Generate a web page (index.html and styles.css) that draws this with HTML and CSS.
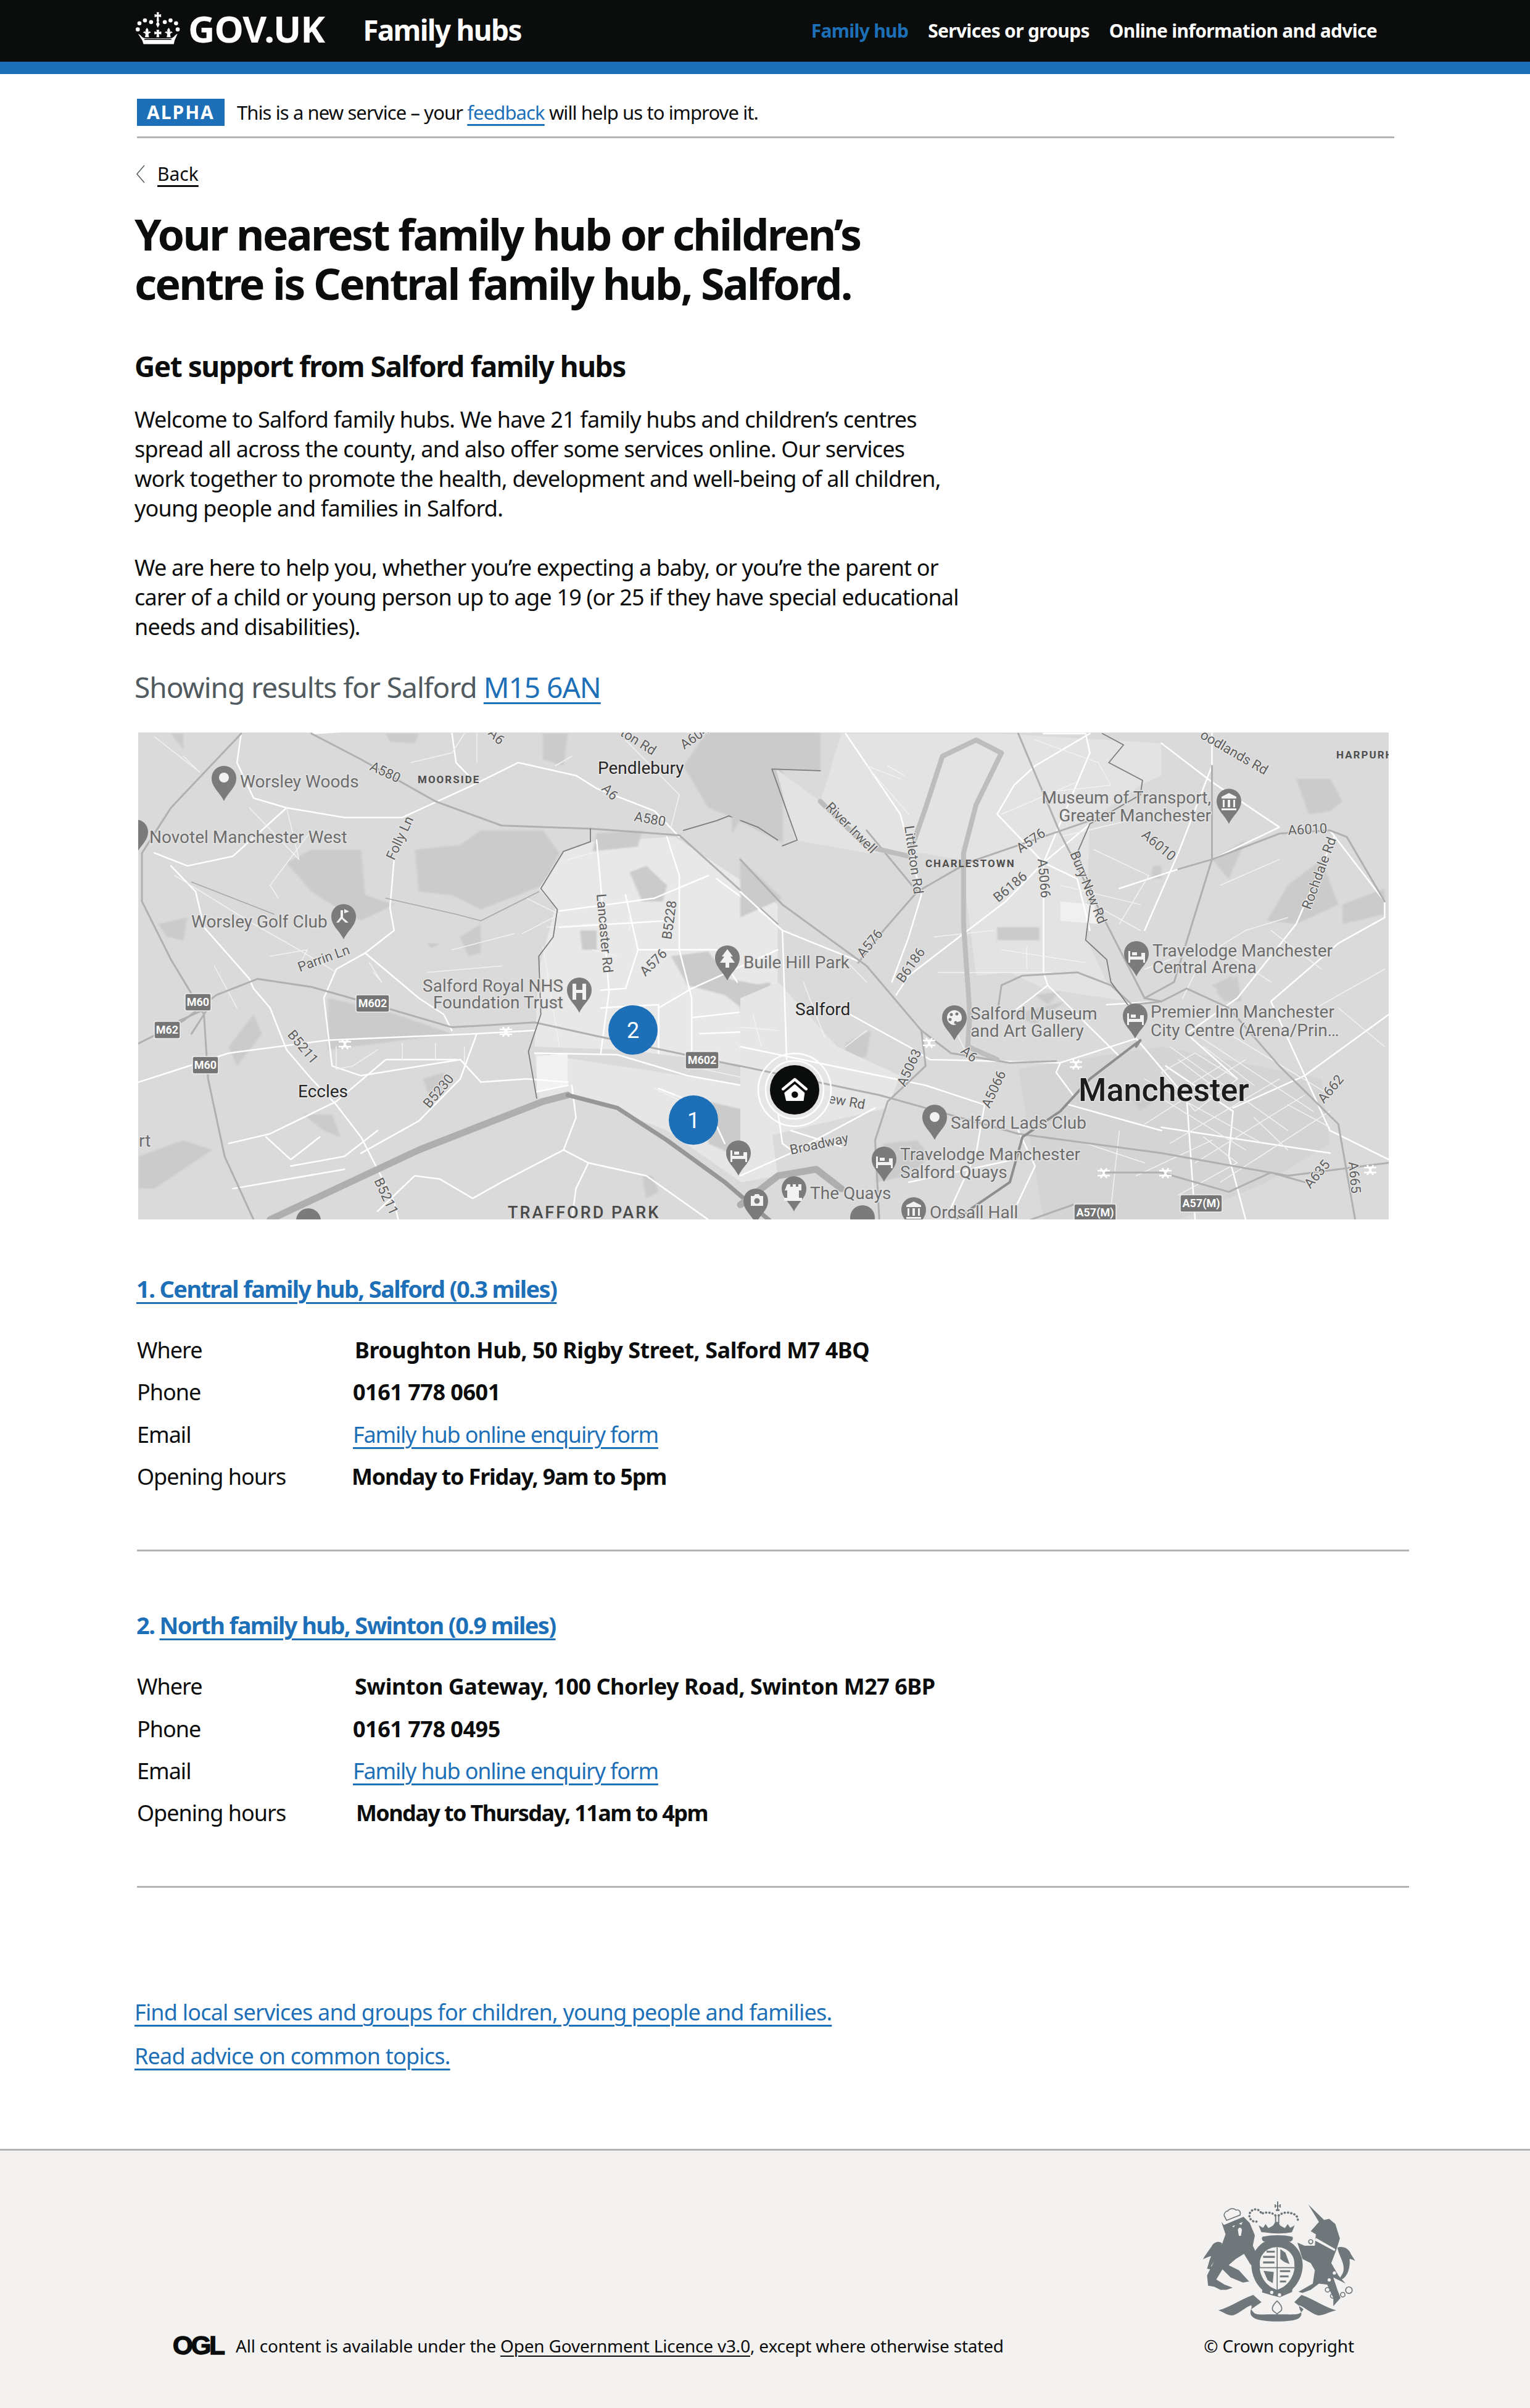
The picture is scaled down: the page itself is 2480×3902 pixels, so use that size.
FILE: index.html
```html
<!DOCTYPE html>
<html lang="en">
<head>
    <meta charset="UTF-8">
    <meta name="viewport" content="width=device-width, initial-scale=1.0">
    <title>Family hubs</title>
    <link rel="stylesheet" href="styles.css">
</head>
<body>
    <header class="site-header">
        <a class="logo" href="#">
            <svg class="crown" viewBox="30 20 220 165" aria-hidden="true">
                <g fill="#fff">
                    <path d="M132 22h12l-2 12 12-2v14l-12-2 2 24h-12l2-24-12 2V32l12 2z"/>
                    <path d="M138 64l9 17-9 17-9-17z"/>
                    <circle cx="48" cy="76" r="10"/><circle cx="75" cy="62" r="10"/><circle cx="105" cy="70" r="10"/>
                    <circle cx="172" cy="70" r="10"/><circle cx="200" cy="62" r="10"/><circle cx="227" cy="76" r="10"/>
                    <circle cx="40" cy="106" r="10"/><circle cx="235" cy="106" r="10"/>
                    <path d="M131 108h14l-2 10 12-2v14l-12-2 2 16h-14l2-16-12 2v-14l12 2z"/>
                    <path d="M85 98c7 8 9 14 5 20 6-4 12-2 14 4-6 0-10 2-12 8l3 14H75l3-14c-2-6-6-8-12-8 2-6 8-8 14-4-4-6-2-12 5-20z"/>
                    <path d="M191 98c7 8 9 14 5 20 6-4 12-2 14 4-6 0-10 2-12 8l3 14h-20l3-14c-2-6-6-8-12-8 2-6 8-8 14-4-4-6-2-12 5-20z"/>
                    <path d="M42 128c6 2 12 6 16 12l10 8 14 2h112l14-2 10-8c4-6 10-10 16-12l-14 32-4 18H68l-6-18z"/>
                </g>
                <g fill="#0b0c0c">
                    <path d="M72 152h132v5H72z"/>
                </g>
            </svg>
            <span class="logo-text">GOV.UK</span>
        </a>
        <a class="service-name" href="#">Family hubs</a>
        <nav class="top-nav">
            <a class="active" href="#">Family hub</a>
            <a href="#">Services or groups</a>
            <a href="#">Online information and advice</a>
        </nav>
    </header>

    <div class="container">
        <div class="phase-banner">
            <strong class="tag">ALPHA</strong>
            <span>This is a new service – your <a href="#">feedback</a> will help us to improve it.</span>
        </div>

        <a class="back-link" href="#">
            <svg class="chevron" viewBox="0 0 15 30" aria-hidden="true"><path d="M14 1 2 15l12 14" fill="none" stroke="#505a5f" stroke-width="1.500"/></svg>
            <span>Back</span>
        </a>

        <div class="intro">
            <h1>Your nearest family hub or children’s centre is Central family hub, Salford.</h1>
            <h2>Get support from Salford family hubs</h2>
            <p>Welcome to Salford family hubs. We have 21 family hubs and children’s centres<br>spread all across the county, and also offer some services online. Our services<br>work together to promote the health, development and well-being of all children,<br>young people and families in Salford.</p>
            <p>We are here to help you, whether you’re expecting a baby, or you’re the parent or<br>carer of a child or young person up to age 19 (or 25 if they have special educational<br>needs and disabilities).</p>
        </div>

        <p class="showing">Showing results for Salford <a href="#">M15 6AN</a></p>

        <svg class="map" viewBox="0 0 2027 789" role="img" aria-label="Map of Salford">
            <rect width="2027" height="789" fill="#dadada"/>

            <!-- west half, coordinates read off the crop -->
            <g transform="translate(-14 -14) scale(.67 .523)">
                <g class="patch">
                    <path d="M380 430 440 390 560 390 570 530 640 560 560 610 490 560 440 520z"/>
                    <path d="M690 390 800 375 850 330 1000 330 1040 400 1000 500 850 575 780 530 700 520z"/>
                    <path d="M1000 30 1060 30 1050 130 1000 110zM620 30 700 30 690 60 630 55zM100 30 130 30 130 80z"/>
                    <path d="M22 1340 130 1290 200 1320 60 1440 22 1440zM800 660 850 620 850 710 820 720zM720 680 750 680 730 695z"/>
                    <path d="M240 1000 300 900 320 960 260 1060zM480 850 620 890 780 960 480 1010z"/>
                    <path d="M1240 1400 1265 1400 1280 1450 1250 1470zM710 1100 760 1080 760 1130 730 1170zM420 1210 490 1210 510 1280 470 1260z"/>
                    <path d="M70 620 140 600 130 670 90 660z"/>
                    <path d="M1400 20 1580 20 1580 370 1450 285 1400 260 1340 130z"/>
                </g>
                <path d="M1050 395 1120 365 1320 350 1568 560 1568 1070 1200 1010 980 1000 990 760 1030 570 990 510z" fill="#e8e8e8"/>
                <path d="M980 1020 1540 1130 1568 1400 1480 1420 1300 1260 1080 1150 990 1160z" fill="#e6e6e6"/>
                <path d="M985 1030 1060 1020 1060 1120 985 1140z" fill="#f2f2f2"/>
                <g class="patch">
                    <path d="M1130 340 1240 330 1230 380 1120 395zM1090 640 1130 640 1130 700 1095 700z"/>
                    <path d="M1210 460 1250 440 1300 500 1290 550 1240 550z"/>
                    <path d="M1310 720 1400 705 1450 790 1568 820 1480 880 1440 840 1350 810z"/>
                    <path d="M1400 1170 1500 1200 1490 1300 1470 1340 1400 1300z"/>
                </g>
                <g class="m-white">
                    <path d="M380 260 520 290 660 290 830 190 940 120 1080 160 1130 200 1270 270 1330 350"/>
                    <path d="M60 400 140 440 250 410 380 260 300 230 260 120 270 30"/>
                    <path d="M100 440 160 520 180 630 290 790 300 820 340 880 380 1010 440 1100 500 1180 560 1280 640 1480 650 1536"/>
                    <path d="M640 420 630 570 640 640 570 710 500 760 470 850 490 1060 560 1090 800 1040 850 1110 960 1100 1060 1110"/>
                    <path d="M570 710 700 850 760 900 780 950M240 1300 340 1270 500 1170 620 1040 790 1040"/>
                    <path d="M560 1330 700 1230 800 1100 840 960M390 1370 520 1340 600 1260"/>
                    <path d="M22 1110 240 1020 480 980 840 960 980 950M440 30 560 20M780 30 790 120 820 160"/>
                    <path d="M1130 360 1140 500 1160 830 1140 1020M1040 580 1270 540 1400 470M1040 630 1300 610M1200 530 1230 700 1200 820 1140 825"/>
                    <path d="M1300 350 1330 470 1330 700 1360 850 1360 1030M1230 700 1330 700 1420 700 1470 800M1280 880 1360 820 1568 700"/>
                    <path d="M1140 880 1280 870 1280 1020M1360 910 1568 880M1380 960 1568 950M1420 480 1568 620"/>
                    <path d="M980 1020 1180 1025 1350 1090 1568 1140"/>
                    <path d="M1060 1120 985 1140M1070 1120 1080 1220 1050 1320 900 1420 830 1470 750 1410 690 1400 600 1510"/>
                    <path d="M1050 1320 1110 1360 1080 1440 1070 1536M1110 1360 1250 1400 1400 1536M1280 1130 1400 1190 1440 1300"/>
                    <path d="M250 1440 520 1380M330 1280 390 1350 460 1280"/>
                </g>
                <g class="m-thin">
                    <path d="M60 40 170 150 130 100M680 120 780 90 810 30M840 30 840 120M1030 130 1070 100M1200 50 1330 220 1310 320"/>
                    <path d="M290 260 410 420 380 260M440 330 340 500 360 540M110 470 300 620 410 700 500 770"/>
                    <path d="M205 750 260 880M340 720 430 700 410 750M580 740 610 800 590 770M720 770 900 750M780 700 930 650"/>
                    <path d="M500 1000 500 1070 540 1060 600 1010M660 1040 660 990M740 1040 740 990M810 1000 810 1050"/>
                    <path d="M1270 1130 1370 1190M1010 630 1130 620M1060 420 1120 400M1210 590 1210 640M1180 720 1120 700"/>
                    <path d="M1390 1070 1568 1120M1320 1150 1400 1190M1000 690 1040 1000M960 540 1040 590 950 650"/>
                </g>
                <path class="m-road" d="M440 30 560 110 740 240 900 315 1120 325 1330 345 1568 620"/>
                <path class="m-road" d="M270 30 100 260 30 400 30 550 100 730 180 900 190 1100 230 1340 300 1536"/>
                <path class="m-road" d="M22 990 130 920 210 840 310 790 440 815 620 880 780 940 980 925 1140 970 1568 1085"/>
                <path class="m-road" d="M120 920 190 880 150 960"/>
                <path class="m-border" d="M1450 285 1420 300 1340 330M1115 325 1115 365 1050 395 995 510 1035 575 1025 660 990 720 995 900 965 1015 985 1160"/>
                <path class="m-border" d="M1450 285 1520 320 1568 360"/>
                <path class="m-thin-dark" d="M150 490 350 590 M620 540 790 590 850 610 990 520"/>
                <path class="m-canal" d="M340 1536 700 1320 1000 1170 1060 1150"/>
                <path class="m-cut" d="M1060 1150 1180 1190 1300 1290 1440 1420 1568 1560"/>
            </g>

            <!-- east half -->
            <g transform="translate(976 -14) scale(.6826 .523)">
                <g class="patch">
                    <path d="M-20 340 75 140 190 145 190 20 -20 20z"/>
                    <path d="M0 420 50 480 100 540 0 600zM0 820 70 800 80 860 0 900z"/>
                    <path d="M640 240 690 240 660 280zM830 80 900 90 880 130 830 130z"/>
                    <path d="M1320 170 1400 170 1430 240 1400 270 1350 280zM1380 420 1300 500 1250 610 1320 620 1420 560z"/>
                    <path d="M1430 560 1530 510 1530 590 1430 620zM1200 360 1120 420 1160 480z"/>
                    <path d="M250 990 310 950 300 1030 250 1050zM340 1300 420 1290 450 1340 400 1400 320 1420z"/>
                    <path d="M1120 810 1170 780 1150 840zM820 1170 900 1150 880 1220zM1280 1120 1330 1090 1340 1160z"/>
                    <path d="M640 900 710 880 770 860 700 930zM0 1200 30 1180 30 1250 0 1250z"/>
                </g>
                <path d="M85 140 190 240 240 30 620 30 1000 60 1000 160 950 190 830 300 820 660 870 800 920 860 720 820 640 770 560 780 540 570 520 420 430 400 300 400 130 360z" fill="#e3e3e3"/>
                <path d="M0 850 90 800 230 1000 380 1090 350 1190 120 1260 0 1300z" fill="#e6e6e6"/>
                <path d="M660 1070 750 1050 1000 1000 1380 1100 1400 1300 1250 1420 1040 1536 720 1536z" fill="#d4d4d4"/>
                <path d="M760 550 840 560 850 620 760 610z" fill="#f0f0f0"/>
                <g class="patch">
                    <path d="M610 630 710 630 710 670 610 670zM980 440 1000 440 1000 480 975 480z"/>
                    <path d="M1130 830 1180 780 1190 860 1150 860zM930 1160 980 1170 950 1200zM700 840 760 830 730 870z"/>
                </g>
                <g class="m-white">
                    <path d="M250 30 380 280 430 530 400 660 360 800M720 30 820 30 830 90 720 430 720 770 730 810 900 1030"/>
                    <path d="M610 280 650 190 700 130 830 30M610 280 720 430 800 480 830 640M100 640 110 1040M0 520 100 640 290 740"/>
                    <path d="M370 840 400 780 630 550 720 430 840 300M260 900 400 1000M730 810 640 900M870 870 1000 860M0 1000 440 1120 580 1180"/>
                    <path d="M400 1000 450 1040 760 1050 940 975M760 1050 750 1080 790 1150M960 640 1040 400 1120 130 1120 30"/>
                    <path d="M1000 60 1120 180 1280 320 1120 420 1040 450 900 510M1300 340 1400 330 1530 550 1530 600"/>
                    <path d="M1410 350 1320 620 1180 850 1060 960 1180 1100M1530 600 1420 680 1260 860 1400 1260 1540 1350"/>
                    <path d="M1010 1060 1170 1200 1160 1340 1200 1536M1000 1250 1400 1330M940 975 1060 1160 1080 1536M1170 1190 1340 1090 1540 900"/>
                    <path d="M120 1260 240 1310M0 1400 120 1330 320 1190M90 1210 100 1300 130 1330M580 1180 560 1330 500 1500M780 1180 1000 1260"/>
                    <path d="M660 1260 700 1370 640 1536M400 1420 650 1350"/>
                </g>
                <g class="m-thin">
                    <path d="M380 170 300 130 400 280M350 130 390 160M700 50 850 120 880 190 740 210M620 280 800 180M760 350 920 300"/>
                    <path d="M840 390 970 470 900 620M760 500 950 560M620 700 820 740M680 690 680 760M620 770 740 770M840 560 950 640"/>
                    <path d="M1050 850 1100 720 1200 640 1300 600M1120 680 1260 800M1260 640 1380 760M960 760 1100 690M1140 500 1280 420"/>
                    <path d="M1000 1080 1080 1020 1180 1100 1080 1200 1000 1080M1040 1040 1150 1150M1100 1000 1220 1120M1040 1140 1140 1060"/>
                    <path d="M1100 1280 1180 1360 1040 1460M1220 1220 1300 1320M1300 1180 1400 1250M820 1300 960 1360M900 1260 880 1500"/>
                    <path d="M1340 900 1530 760M1420 880 1530 1000M240 720 300 800M150 800 200 970M460 660 600 640M470 770 620 770"/>
                    <path d="M500 920 540 1030M250 1000 300 950M0 940 90 950M30 900 50 1000"/>
                    <path d="M960 1100 1240 1300M1000 1160 1200 1320M1020 1000 1300 1260M1080 960 1360 1200M1160 960 1400 1150"/>
                    <path d="M960 1240 1200 1040M1020 1300 1280 1100M1080 1360 1340 1150M1140 1420 1400 1200M940 1400 1120 1290"/>
                </g>
                <path class="m-road" d="M0 1060 330 1150 660 1270 1000 1330 1300 1400 1540 1360"/>
                <path class="m-road" d="M660 30 760 340 960 850 1000 860 1060 820 1160 880 1280 1060 1420 1240 1460 1536"/>
                <path class="m-road" d="M280 740 340 640 420 520 540 430 830 300M420 520 300 330 M0 420 100 560 300 750 430 950 500 1020 640 1050 750 1045"/>
                <path class="m-road" d="M430 950 440 1060 350 1170 320 1290 330 1536"/>
                <path class="m-road" d="M1040 450 1120 420 1280 340 1400 330 1440 350 1530 550M1120 130 1120 420 1030 800 960 850"/>
                <path class="m-road" d="M610 900 620 810 670 780 800 770 880 810 930 870 1000 860"/>
                <path class="m-road" d="M1160 1450 1260 1390 1340 1420M860 1390 1000 1390 1160 1450M690 1536 790 1490"/>
                <path class="m-border" d="M75 140 190 145M75 140 135 360 100 378M860 30 910 65 875 120 955 175 950 220 830 310 800 400 835 520 820 670 870 730 880 800 920 870"/>
                <path class="m-river" d="M190 240 300 380 400 410 440 260 480 100 560 50 620 90 560 250 530 400 530 620 545 900 540 1000 610 1040"/>
                <path class="m-canal" d="M0 1490 90 1400 180 1380 240 1440"/>
                <path class="m-irwell" d="M510 1536 640 1420 670 1280 760 1200 830 1100 950 980 940 1000"/>
            </g>

            <!-- road shields -->
            <g class="shields">
                <g><rect x="76" y="423" width="42" height="28"/><text x="97" y="443">M60</text></g>
                <g><rect x="26" y="468" width="42" height="28"/><text x="47" y="488">M62</text></g>
                <g><rect x="88" y="525" width="42" height="28"/><text x="109" y="545">M60</text></g>
                <g><rect x="353" y="425" width="54" height="28"/><text x="380" y="445">M602</text></g>
                <g><rect x="887" y="517" width="54" height="28"/><text x="914" y="537">M602</text></g>
                <g><rect x="1517" y="764" width="68" height="28"/><text x="1551" y="784">A57(M)</text></g>
                <g><rect x="1689" y="749" width="68" height="28"/><text x="1723" y="769">A57(M)</text></g>
            </g>

            <!-- rail stations -->
            <g class="stations">
                <path d="M325 501h20m-20 8h20m-15-12 10 16m0-16-10 16"/>
                <path d="M586 481h20m-20 8h20m-15-12 10 16m0-16-10 16"/>
                <path d="M1272 499h20m-20 8h20m-15-12 10 16m0-16-10 16"/>
                <path d="M1510 534h20m-20 8h20m-15-12 10 16m0-16-10 16"/>
                <path d="M1555 710h20m-20 8h20m-15-12 10 16m0-16-10 16"/>
                <path d="M1655 710h20m-20 8h20m-15-12 10 16m0-16-10 16"/>
                <path d="M1987 705h20m-20 8h20m-15-12 10 16m0-16-10 16"/>
            </g>

            <!-- place pins, all the one teardrop -->
            <defs>
                <path id="pin" d="M0 28C-8 12-20 6-20-9A20 20 0 0 1 20-9C20 6 8 12 0 28z"/>
            </defs>
            <g class="pins">
                <use href="#pin" x="139" y="83"/>
                <use href="#pin" x="333" y="307"/>
                <use href="#pin" x="715" y="426"/>
                <use href="#pin" x="955" y="374"/>
                <use href="#pin" x="1768" y="120"/>
                <use href="#pin" x="1618" y="367"/>
                <use href="#pin" x="1616" y="468"/>
                <use href="#pin" x="1323" y="471"/>
                <use href="#pin" x="1291" y="632"/>
                <use href="#pin" x="1209" y="700"/>
                <use href="#pin" x="1063" y="748"/>
                <use href="#pin" x="973" y="690"/>
                <use href="#pin" x="1001" y="768"/>
                <use href="#pin" x="1257" y="782"/>
                <use href="#pin" x="1174" y="795"/>
                <use href="#pin" x="276" y="800"/>
                <use href="#pin" x="-4" y="170"/>
            </g>
            <g class="pin-marks">
                <circle cx="139" cy="73" r="8"/>
                <circle cx="1291" cy="623" r="8"/>
                <!-- golf flag -->
                <path d="M328 288h4v12l9 8h-5l-6-6-5 6h-4l7-9zM334 286l8 4-8 3z"/>
                <!-- hospital H -->
                <path d="M704 407h6v10h10v-10h6v26h-6v-11h-10v11h-6z"/>
                <!-- tree -->
                <path d="M955 351l9 12h-4l7 10h-9v8h-6v-8h-9l7-10h-4z"/>
                <!-- museum -->
                <path d="M1756 104l12-6 12 6v3h-24zM1758 109h3v12h-3zM1766 109h4v12h-4zM1775 109h3v12h-3zM1756 123h24v3h-24z"/>
                <path d="M1245 766l12-6 12 6v3h-24zM1247 771h3v12h-3zM1255 771h4v12h-4zM1264 771h3v12h-3zM1245 785h24v3h-24z"/>
                <!-- beds -->
                <path d="M1605 354h3v9h18v-6h6v16h-3v-5h-21v5h-3zM1611 356h8v5h-8z"/>
                <path d="M1603 455h3v9h18v-6h6v16h-3v-5h-21v5h-3zM1609 457h8v5h-8z"/>
                <path d="M1196 687h3v9h18v-6h6v16h-3v-5h-21v5h-3zM1202 689h8v5h-8z"/>
                <path d="M960 677h3v9h18v-6h6v16h-3v-5h-21v5h-3zM966 679h8v5h-8z"/>
                <!-- palette -->
                <path d="M1323 450a12 12 0 1 0 0 24c4 0 2-4 5-5 5-1 7-2 7-7 0-7-5-12-12-12z"/>
                <!-- castle -->
                <path d="M1052 732h5v4h4v-4h5v4h4v-4h5v10h-4v12h5v5h-29v-5h5v-12h-4z"/>
                <!-- camera -->
                <path d="M993 751h5l2-3h6l2 3h5v16h-20z"/>
            </g>
            <g class="pins">
                <circle cx="1318" cy="457" r="2.500"/><circle cx="1327" cy="456" r="2.500"/><circle cx="1316" cy="465" r="2.500"/><circle cx="1325" cy="470" r="2.500"/>
                <circle cx="1003" cy="759" r="4.500"/>
            </g>

            <!-- labels -->
            <g class="lbl">
                <text x="165" y="89">Worsley Woods</text>
                <text x="18" y="179">Novotel Manchester West</text>
                <text x="86" y="316">Worsley Golf Club</text>
                <text x="689" y="420" text-anchor="end">Salford Royal NHS</text>
                <text x="689" y="447" text-anchor="end">Foundation Trust</text>
                <text x="981" y="382">Buile Hill Park</text>
                <text x="1739" y="115" text-anchor="end">Museum of Transport,</text>
                <text x="1739" y="144" text-anchor="end">Greater Manchester</text>
                <text x="1644" y="363">Travelodge Manchester</text>
                <text x="1644" y="390">Central Arena</text>
                <text x="1641" y="462">Premier Inn Manchester</text>
                <text x="1641" y="492">City Centre (Arena/Prin…</text>
                <text x="1349" y="465">Salford Museum</text>
                <text x="1349" y="493">and Art Gallery</text>
                <text x="1317" y="642">Salford Lads Club</text>
                <text x="1235" y="693">Travelodge Manchester</text>
                <text x="1235" y="722">Salford Quays</text>
                <text x="1089" y="756">The Quays</text>
                <text x="1283" y="787">Ordsall Hall</text>
                <text x="1" y="671">rt</text>
            </g>
            <g class="lbl-dark">
                <text x="745" y="67">Pendlebury</text>
                <text x="259" y="591">Eccles</text>
                <text x="1065" y="458">Salford</text>
            </g>
            <text class="lbl-city" x="1524" y="597">Manchester</text>
            <g class="lbl-area">
                <text x="453" y="82">MOORSIDE</text>
                <text x="1276" y="218">CHARLESTOWN</text>
                <text x="1942" y="42">HARPURH</text>
            </g>
            <text class="lbl-park" x="599" y="787">TRAFFORD PARK</text>
            <g class="lbl-road">
                <text transform="translate(374 60) rotate(25)">A580</text>
                <text transform="translate(566 2) rotate(45)">A6</text>
                <text transform="translate(780 4) rotate(32)">ton Rd</text>
                <text transform="translate(885 28) rotate(-35)">A6044</text>
                <text transform="translate(750 92) rotate(45)">A6</text>
                <text transform="translate(803 143) rotate(10)">A580</text>
                <text transform="translate(415 208) rotate(-65)">Folly Ln</text>
                <text transform="translate(262 388) rotate(-20)">Parrin Ln</text>
                <text transform="translate(743 262) rotate(85)">Lancaster Rd</text>
                <text transform="translate(864 336) rotate(-82)">B5228</text>
                <text transform="translate(822 396) rotate(-45)">A576</text>
                <text transform="translate(241 490) rotate(50)">B5211</text>
                <text transform="translate(382 726) rotate(65)">B5211</text>
                <text transform="translate(472 610) rotate(-50)">B5230</text>
                <text transform="translate(1113 122) rotate(45)">River Irwell</text>
                <text transform="translate(1242 152) rotate(82)">Littleton Rd</text>
                <text transform="translate(1430 196) rotate(-35)">A576</text>
                <text transform="translate(1458 205) rotate(85)">A5066</text>
                <text transform="translate(1394 276) rotate(-40)">B6186</text>
                <text transform="translate(1510 196) rotate(68)">Bury New Rd</text>
                <text transform="translate(1720 8) rotate(30)">oodlands Rd</text>
                <text transform="translate(1625 168) rotate(40)">A6010</text>
                <text transform="translate(1864 166) rotate(-3)">A6010</text>
                <text transform="translate(1900 288) rotate(-70)">Rochdale Rd</text>
                <text transform="translate(1175 366) rotate(-50)">A576</text>
                <text transform="translate(1240 407) rotate(-55)">B6186</text>
                <text transform="translate(1332 518) rotate(40)">A6</text>
                <text transform="translate(1243 575) rotate(-65)">A5063</text>
                <text transform="translate(1380 610) rotate(-65)">A5066</text>
                <text transform="translate(1118 600) rotate(10)">ew Rd</text>
                <text transform="translate(1058 684) rotate(-12)">Broadway</text>
                <text transform="translate(1922 602) rotate(-50)">A662</text>
                <text transform="translate(1900 740) rotate(-50)">A635</text>
                <text transform="translate(1962 696) rotate(85)">A665</text>
            </g>

            <!-- result markers -->
            <g class="marker">
                <circle cx="802" cy="482" r="40"/><text x="802" y="495">2</text>
                <circle cx="900" cy="628" r="40"/><text x="900" y="641">1</text>
            </g>
            <g class="home-marker">
                <circle cx="1064" cy="579" r="59" fill="none" stroke="#fff" stroke-width="2.500"/>
                <circle cx="1064" cy="579" r="47" fill="none" stroke="#fff" stroke-width="2.500"/>
                <circle cx="1064" cy="579" r="40" fill="#0b0c0c"/>
                <path d="M1045.300 577.700 1064.300 562 1082.700 577.700" fill="none" stroke="#fff" stroke-width="4.500" stroke-linecap="round" stroke-linejoin="round"/>
                <path d="M1048.300 584.300 1064.300 571 1079.300 584.300 1077.700 596H1051z" fill="#fff" stroke="#fff" stroke-width="2" stroke-linejoin="round"/>
                <circle cx="1064.300" cy="586.700" r="5.300" fill="#0b0c0c"/>
            </g>
        </svg>

        <section class="result">
            <h3><a href="#">1. Central family hub, Salford (0.3 miles)</a></h3>
            <dl class="details">
                <dt>Where</dt><dd class="nudge-5">Broughton Hub, 50 Rigby Street, Salford M7 4BQ</dd>
                <dt>Phone</dt><dd class="nudge-2">0161 778 0601</dd>
                <dt>Email</dt><dd class="nudge-2 plain"><a href="#">Family hub online enquiry form</a></dd>
                <dt>Opening hours</dt><dd class="tight-1">Monday to Friday, 9am to 5pm</dd>
            </dl>
        </section>

        <section class="result">
            <h3>2. <a href="#">North family hub, Swinton (0.9 miles)</a></h3>
            <dl class="details">
                <dt>Where</dt><dd class="nudge-5">Swinton Gateway, 100 Chorley Road, Swinton M27 6BP</dd>
                <dt>Phone</dt><dd class="nudge-2">0161 778 0495</dd>
                <dt>Email</dt><dd class="nudge-2 plain"><a href="#">Family hub online enquiry form</a></dd>
                <dt>Opening hours</dt><dd class="nudge-7 tight-2">Monday to Thursday, 11am to 4pm</dd>
            </dl>
        </section>

        <ul class="more-links">
            <li><a href="#">Find local services and groups for children, young people and families.</a></li>
            <li><a href="#">Read advice on common topics.</a></li>
        </ul>
    </div>

    <footer class="site-footer">
        <div class="licence">
            <span class="ogl">OGL</span>
            <span>All content is available under the <a href="#">Open Government Licence v3.0</a>, except where otherwise stated</span>
        </div>
        <div class="copyright">
            <svg class="crest" viewBox="150 130 750 625" aria-hidden="true">
                <g fill="#6f777b">
                    <!-- crown over the shield -->
                    <path d="M510 160h6v-20h6v20h6v-6h6v16h-6v-6h-6v14h6v8h-18v-8h6v-14h-6v6h-6v-16h6z"/>
                    <path d="M440 290l-14-34 22 12 12-18 14 20 22-12 12-18h12l12 18 22 12 14-20 12 18 22-12-14 34c-40 8-90 8-136 0z"/>
                    <path d="M445 312c50-10 100-10 146 0 6 10-2 24-14 24H458c-14 0-20-14-13-24z"/>
                    <path d="M506 205h6v42h-6zM521 205h6v42h-6z"/>
                    <!-- garter ring -->
                    <path fill-rule="evenodd" d="M516 320c70 0 125 58 125 130s-55 150-125 150-125-78-125-150 55-130 125-130zm0 44c-48 0-85 40-85 92 0 50 38 104 85 112 47-8 85-62 85-112 0-52-37-92-85-92z"/>
                    <!-- lion -->
                    <path d="M258 255l95-40 30 30 25 60-10 50 25 55 22 50-30 10-30-25-30-50-40 25-35 30 50 25 50 55-30 5-60-25-40-40-30 50 40 25 40 15-30 10-30 0-30-15-30-5-5-50 20-40 40-75 30-85-20-60z"/>
                    <path d="M248 345c-10-15-40-8-50 12-8 15-30 40-43 65 20-10 30-15 40-15-10 20-10 30-20 60 20 5 50 10 75-10l-12-8-45 8c18-30 60-60 55-112z"/>
                    <!-- unicorn -->
                    <path d="M668 155 745 230 770 225 800 250 822 320 805 375 780 440 815 500 850 540 830 530 790 510 810 570 825 610 790 650 790 610 760 545 720 540 680 570 640 585 620 580 690 540 700 475 680 440 640 420 615 340 650 355 700 355 705 300 680 285 720 240z"/>
                    <path d="M810 365c20-10 55 0 65 30l22 35c-10-5-20-10-28-10 5 40-10 90-40 100-15-5 5-20 10-40 8-40-20-70-29-115z"/>
                    <!-- motto ribbon -->
                    <path d="M230 670c60-15 100-50 170-75l40 35-50 35c20 30 20 25 125 25s110 5 130-25l-45-35 35-35c70 25 110 60 170 75-30 5-60 25-90 25-40-15-65-40-90-50-10 20 30 40-5 65-30 20-190 20-220-5-30-25 0-45-10-60-30 10-50 35-90 50-30 0-40-15-70-25z"/>
                </g>
                <!-- shield -->
                <path d="M432 440c0-45 40-78 84-78s84 33 84 78c0 60-40 115-84 130-44-15-84-70-84-130z" fill="#f3f2f1"/>
                <g fill="#6f777b">
                    <path d="M514 362h5v208h-5zM432 460h168v5h-168z"/>
                    <path d="M465 380h40v9h-40zM448 405h57v10h-57zM448 432h55v10h-55zM532 372l25 18 20 55-25-10-20-15zM530 475h50v9h-50zM530 500h42v9h-42zM530 525h30v9h-30z"/>
                    <path d="M450 478l50 5-5 55-25-15z"/>
                    <path d="M445 555l80 26 68-26-4 26-60 26-86-24z"/>
                </g>
                <g fill="#f3f2f1">
                    <circle cx="490" cy="583" r="8"/><circle cx="528" cy="595" r="8"/>
                    <circle cx="800" cy="443" r="9"/><circle cx="795" cy="488" r="8"/><circle cx="770" cy="522" r="8"/>
                    <path d="M706 318 800 372 796 382 700 330z"/>
                    <path d="M295 260l18-8-8 14zM330 248l18-8-6 14z"/>
                    <path d="M326 285a10 12 0 1 1 18 0l-4 22h-10z"/>
                </g>
                <g fill="none" stroke="#6f777b">
                    <path d="M416 238a30 30 0 1 1 24-38c20-10 50-8 68 8M524 208c22-16 48-18 68-8a30 30 0 0 1 24 38" stroke-dasharray="1 15" stroke-linecap="round" stroke-width="11"/>
                    <path d="M270 232l-12-24a22 22 0 0 1 18-22c10-14 30-14 40-4 16-4 24 8 20 24z" stroke-width="5"/>
                    <circle cx="680" cy="336" r="10" stroke-width="5"/><circle cx="668" cy="418" r="11" stroke-width="5"/>
                    <circle cx="762" cy="570" r="11" stroke-width="5"/><circle cx="787" cy="600" r="11" stroke-width="5"/><circle cx="836" cy="594" r="11" stroke-width="5"/><circle cx="866" cy="572" r="16" stroke-width="5"/>
                    <path d="M516 625c-22 20-30 40-16 50 6 6 12 6 16 14 4-8 10-8 16-14 14-10 6-30-16-50z" stroke-width="5"/>
                </g>
                <path d="M258 255l95-40 8 18-95 42z" fill="#6f777b"/>
            </svg>
            <span>© Crown copyright</span>
        </div>
    </footer>
</body>
</html>
```

FILE: styles.css
```css
body{
    margin: 0;
    font-family: "Noto Sans", sans-serif;
    font-size: 36px;
    line-height: 48px;
    letter-spacing: -0.8px;
    color: #0b0c0c;
    background-color: #fff;
}
a{
    color: #1d70b8;
    text-decoration: underline;
    text-decoration-thickness: 3px;
    text-underline-offset: 7px;
}

/* top bar */
.site-header{
    display: flex;
    align-items: center;
    height: 100px;
    padding: 0 248px 0 220px;
    background-color: #0b0c0c;
    border-bottom: 20px solid #1d70b8;
}
.site-header a{
    color: #fff;
    text-decoration: none;
    font-weight: 700;
}
.logo{
    display: flex;
    align-items: center;
    gap: 12px;
    margin-bottom: 8px;
}
.crown{
    width: 73px;
    height: 55px;
}
.logo-text{
    font-size: 60px;
    line-height: 60px;
    letter-spacing: -1px;
}
.service-name{
    margin: 0 0 5px 62px;
    font-size: 46px;
    font-weight: 600;
    letter-spacing: -1.7px;
}
.top-nav{
    display: flex;
    gap: 32px;
    margin-left: auto;
    font-size: 30px;
    letter-spacing: -0.7px;
}
.site-header .top-nav .active{
    color: #1d70b8;
}

.container{
    padding: 0 196px 0 218px;
}

/* alpha strip */
.phase-banner{
    display: flex;
    align-items: center;
    gap: 20px;
    margin: 0 24px 0 4px;
    padding: 40px 0 17px;
    border-bottom: 3px solid #b1b4b6;
    font-size: 31px;
    line-height: 44px;
    letter-spacing: -0.9px;
}
.tag{
    padding: 0 16px;
    background-color: #1d70b8;
    color: #fff;
    font-size: 30px;
    letter-spacing: 2px;
}

.back-link{
    display: flex;
    align-items: center;
    gap: 20px;
    margin: 40px 0 0 2px;
    color: #0b0c0c;
    font-size: 30px;
    line-height: 36px;
    letter-spacing: 0;
}
.chevron{
    width: 15px;
    height: 30px;
}

.intro{
    width: 1400px;
}
h1{
    margin: 39px 0 0;
    width: 1240px;
    font-size: 70px;
    line-height: 80px;
    font-weight: 700;
    letter-spacing: -2.8px;
}
h2{
    margin: 64px 0 0;
    font-size: 46px;
    line-height: 60px;
    font-weight: 700;
    letter-spacing: -1.5px;
}
.intro p{
    margin: 33px 0 0;
}
.intro p + p{
    margin-top: 48px;
}
.showing{
    margin: 43px 0 0;
    color: #505a5f;
    font-size: 46px;
    line-height: 60px;
    letter-spacing: -1px;
}

.map{
    display: block;
    width: 2027px;
    height: 789px;
    margin: 44px 0 0 6px;
    letter-spacing: 0;
}
.map text{
    font-family: Roboto, sans-serif;
}
.patch{
    fill: #cbcbcb;
    filter: blur(2px);
}
.m-white, .m-thin, .m-road, .m-border, .m-thin-dark, .m-canal, .m-cut, .m-river, .m-irwell{
    fill: none;
    stroke-linejoin: round;
    stroke-linecap: round;
}
.m-white path, .m-thin path, .m-road, .m-border, .m-thin-dark, .m-canal, .m-cut, .m-river, .m-irwell{
    vector-effect: non-scaling-stroke;
}
.m-white{
    stroke: #fff;
    stroke-width: 2.500px;
}
.m-thin{
    stroke: #f2f2f2;
    stroke-width: 1.500px;
}
.m-road{
    stroke: #b0b0b0;
    stroke-width: 3px;
}
.m-border{
    stroke: #7c7c7c;
    stroke-width: 1.800px;
}
.m-thin-dark{
    stroke: #a8a8a8;
    stroke-width: 1.500px;
}
.m-canal{
    stroke: #aeaeae;
    stroke-width: 11px;
}
.m-cut{
    stroke: #979797;
    stroke-width: 7px;
}
.m-river{
    stroke: #bdbdbd;
    stroke-width: 8px;
}
.m-irwell{
    stroke: #8e8e8e;
    stroke-width: 4px;
}
.shields rect{
    fill: #757575;
    stroke: #eee;
    stroke-width: 1.500px;
    rx: 3px;
}
.shields text{
    fill: #fff;
    font-size: 18px;
    font-weight: 700;
    text-anchor: middle;
}
.stations path{
    fill: none;
    stroke: #fff;
    stroke-width: 2.500px;
}
.pins{
    fill: #7b7b7b;
}
.pin-marks{
    fill: #f2f2f2;
}
.lbl{
    fill: #6d6d6d;
    font-size: 28px;
    paint-order: stroke;
    stroke: #e4e4e4;
    stroke-width: 3px;
}
.lbl-dark{
    fill: #262626;
    font-size: 28px;
    paint-order: stroke;
    stroke: #e8e8e8;
    stroke-width: 3px;
}
.lbl-city{
    fill: #1c1c1c;
    font-size: 52px;
    font-weight: 500;
    paint-order: stroke;
    stroke: #e4e4e4;
    stroke-width: 3px;
}
.lbl-area{
    fill: #4d4d4d;
    font-size: 17px;
    font-weight: 700;
    letter-spacing: 2px;
}
.lbl-park{
    fill: #4a4a4a;
    font-size: 27px;
    font-weight: 500;
    letter-spacing: 3px;
}
.lbl-road{
    fill: #5e5e5e;
    font-size: 22px;
    paint-order: stroke;
    stroke: #e8e8e8;
    stroke-width: 2.500px;
}
.marker circle{
    fill: #1d70b8;
}
.marker text{
    fill: #fff;
    font-size: 36px;
    text-anchor: middle;
}

/* result blocks */
.result{
    margin: 0 0 0 4px;
    padding: 87px 0 84px;
    border-bottom: 3px solid #b1b4b6;
}
.result + .result{
    padding-top: 94px;
}
.result h3{
    margin: 0 0 0 -1px;
    color: #1d70b8;
    font-size: 38px;
    line-height: 50px;
    font-weight: 700;
    letter-spacing: -1.6px;
}
.result .details{
    display: grid;
    grid-template-columns: 348px 1fr;
    grid-auto-rows: 68.3px;
    margin: 41px 0 0;
    align-items: center;
    letter-spacing: -1px;
}
.details dt, .details dd{
    margin: 0;
}
.details dd{
    font-weight: 700;
    letter-spacing: -0.5px;
}
.details dd.plain{
    font-weight: 400;
    letter-spacing: -1.2px;
}
.details dd.tight-1{
    letter-spacing: -1.2px;
}
.details dd.tight-2{
    letter-spacing: -1.6px;
}
.nudge-2{
    padding-left: 2px;
}
.nudge-5{
    padding-left: 5px;
}
.nudge-7{
    padding-left: 7px;
}

.more-links{
    list-style: none;
    margin: 0;
    padding: 178px 0 0;
}
.more-links li{
    margin-bottom: 23px;
}

/* footer */
.site-footer{
    display: flex;
    align-items: flex-end;
    justify-content: space-between;
    height: 423px;
    margin-top: 126px;
    padding: 0 282px 82px 280px;
    background-color: #f3f2f1;
    border-top: 3px solid #b1b4b6;
    font-size: 28px;
    line-height: 44px;
    letter-spacing: -0.2px;
    box-sizing: border-box;
}
.licence{
    display: flex;
    align-items: center;
    gap: 20px;
}
.site-footer a{
    color: #0b0c0c;
    text-underline-offset: 5px;
    text-decoration-thickness: 2px;
}
.ogl{
    font-family: "Liberation Sans", sans-serif;
    font-size: 42px;
    font-weight: 700;
    letter-spacing: -3px;
    -webkit-text-stroke: 1.500px #0b0c0c;
}
.copyright{
    display: flex;
    flex-direction: column;
    align-items: center;
    gap: 7px;
}
.crest{
    width: 250px;
    height: 208px;
}
```
